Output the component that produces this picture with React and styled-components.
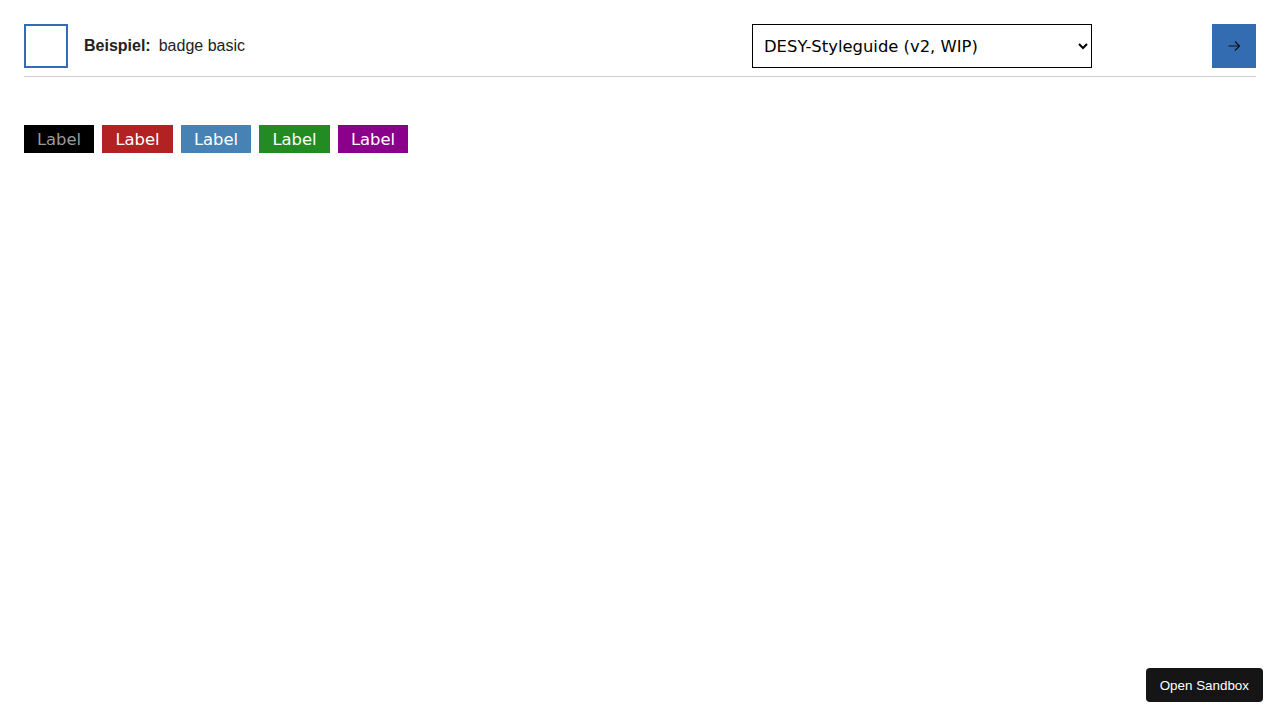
import React from 'react';
import styled, { createGlobalStyle } from 'styled-components';

const GlobalStyle = createGlobalStyle`
  html, body {
    margin: 0;
    padding: 0;
    background: #fff;
  }
  body {
    font-family: "Liberation Sans", Arial, sans-serif;
  }
`;

const Page = styled.div`
  padding: 24px 24px 0;
  min-height: 696px;
  box-sizing: border-box;
`;

const Toolbar = styled.div`
  display: flex;
  align-items: center;
  height: 44px;
  padding-bottom: 8px;
  border-bottom: 1px solid #cccccc;
`;

const Swatch = styled.div`
  width: 44px;
  height: 44px;
  box-sizing: border-box;
  border: 2px solid #336cb0;
`;

const Title = styled.div`
  margin-left: 16px;
  font-size: 16px;
  color: #222;
  display: flex;
  gap: 8px;
  flex: 1;
  b {
    font-weight: 700;
  }
`;

const Select = styled.select`
  width: 340px;
  height: 44px;
  border: 1px solid #000;
  border-radius: 0;
  background: #fff;
  font-family: "DejaVu Sans", Verdana, sans-serif;
  font-size: 16.4px;
  color: #000;
  padding: 0 6px 0 7px;
  margin-right: 120px;
`;

const GoButton = styled.button`
  width: 44px;
  height: 44px;
  border: none;
  background: #336cb0;
  display: flex;
  align-items: center;
  justify-content: center;
  padding: 0;
`;

const Badges = styled.div`
  display: flex;
  gap: 8px;
  margin-top: 48px;
`;

const Badge = styled.span`
  display: inline-flex;
  align-items: center;
  justify-content: center;
  height: 28px;
  width: ${p => p.w}px;
  background: ${p => p.bg};
  color: ${p => p.fg || '#fff'};
  font-family: "DejaVu Sans", Verdana, sans-serif;
  font-size: 16.4px;
`;

const Sandbox = styled.button`
  position: fixed;
  right: 17px;
  bottom: 18px;
  height: 34px;
  padding: 0 14px;
  background: #151515;
  color: #fff;
  border: none;
  border-radius: 4px;
  font-family: "Liberation Sans", Arial, sans-serif;
  font-size: 13.4px;
`;

const badges = [
  { bg: '#000000', fg: '#999999', w: 70 },
  { bg: '#b22222', w: 71 },
  { bg: '#4682b4', w: 70 },
  { bg: '#228b22', w: 71 },
  { bg: '#8b008b', w: 70 },
];

export default function App() {
  return (
    <>
      <GlobalStyle />
      <Page>
        <Toolbar>
          <Swatch />
          <Title>
            <b>Beispiel:</b>
            <span>badge basic</span>
          </Title>
          <Select defaultValue="v2">
            <option value="v2">DESY-Styleguide (v2, WIP)</option>
          </Select>
          <GoButton aria-label="Öffnen">
            <svg width="14" height="14" viewBox="0 0 14 14" fill="none" stroke="#111" strokeWidth="1.1">
              <path d="M1.5 7h11M8 2.5 12.5 7 8 11.5" />
            </svg>
          </GoButton>
        </Toolbar>
        <Badges>
          {badges.map((b, i) => (
            <Badge key={i} bg={b.bg} fg={b.fg} w={b.w}>Label</Badge>
          ))}
        </Badges>
      </Page>
      <Sandbox>Open Sandbox</Sandbox>
    </>
  );
}
